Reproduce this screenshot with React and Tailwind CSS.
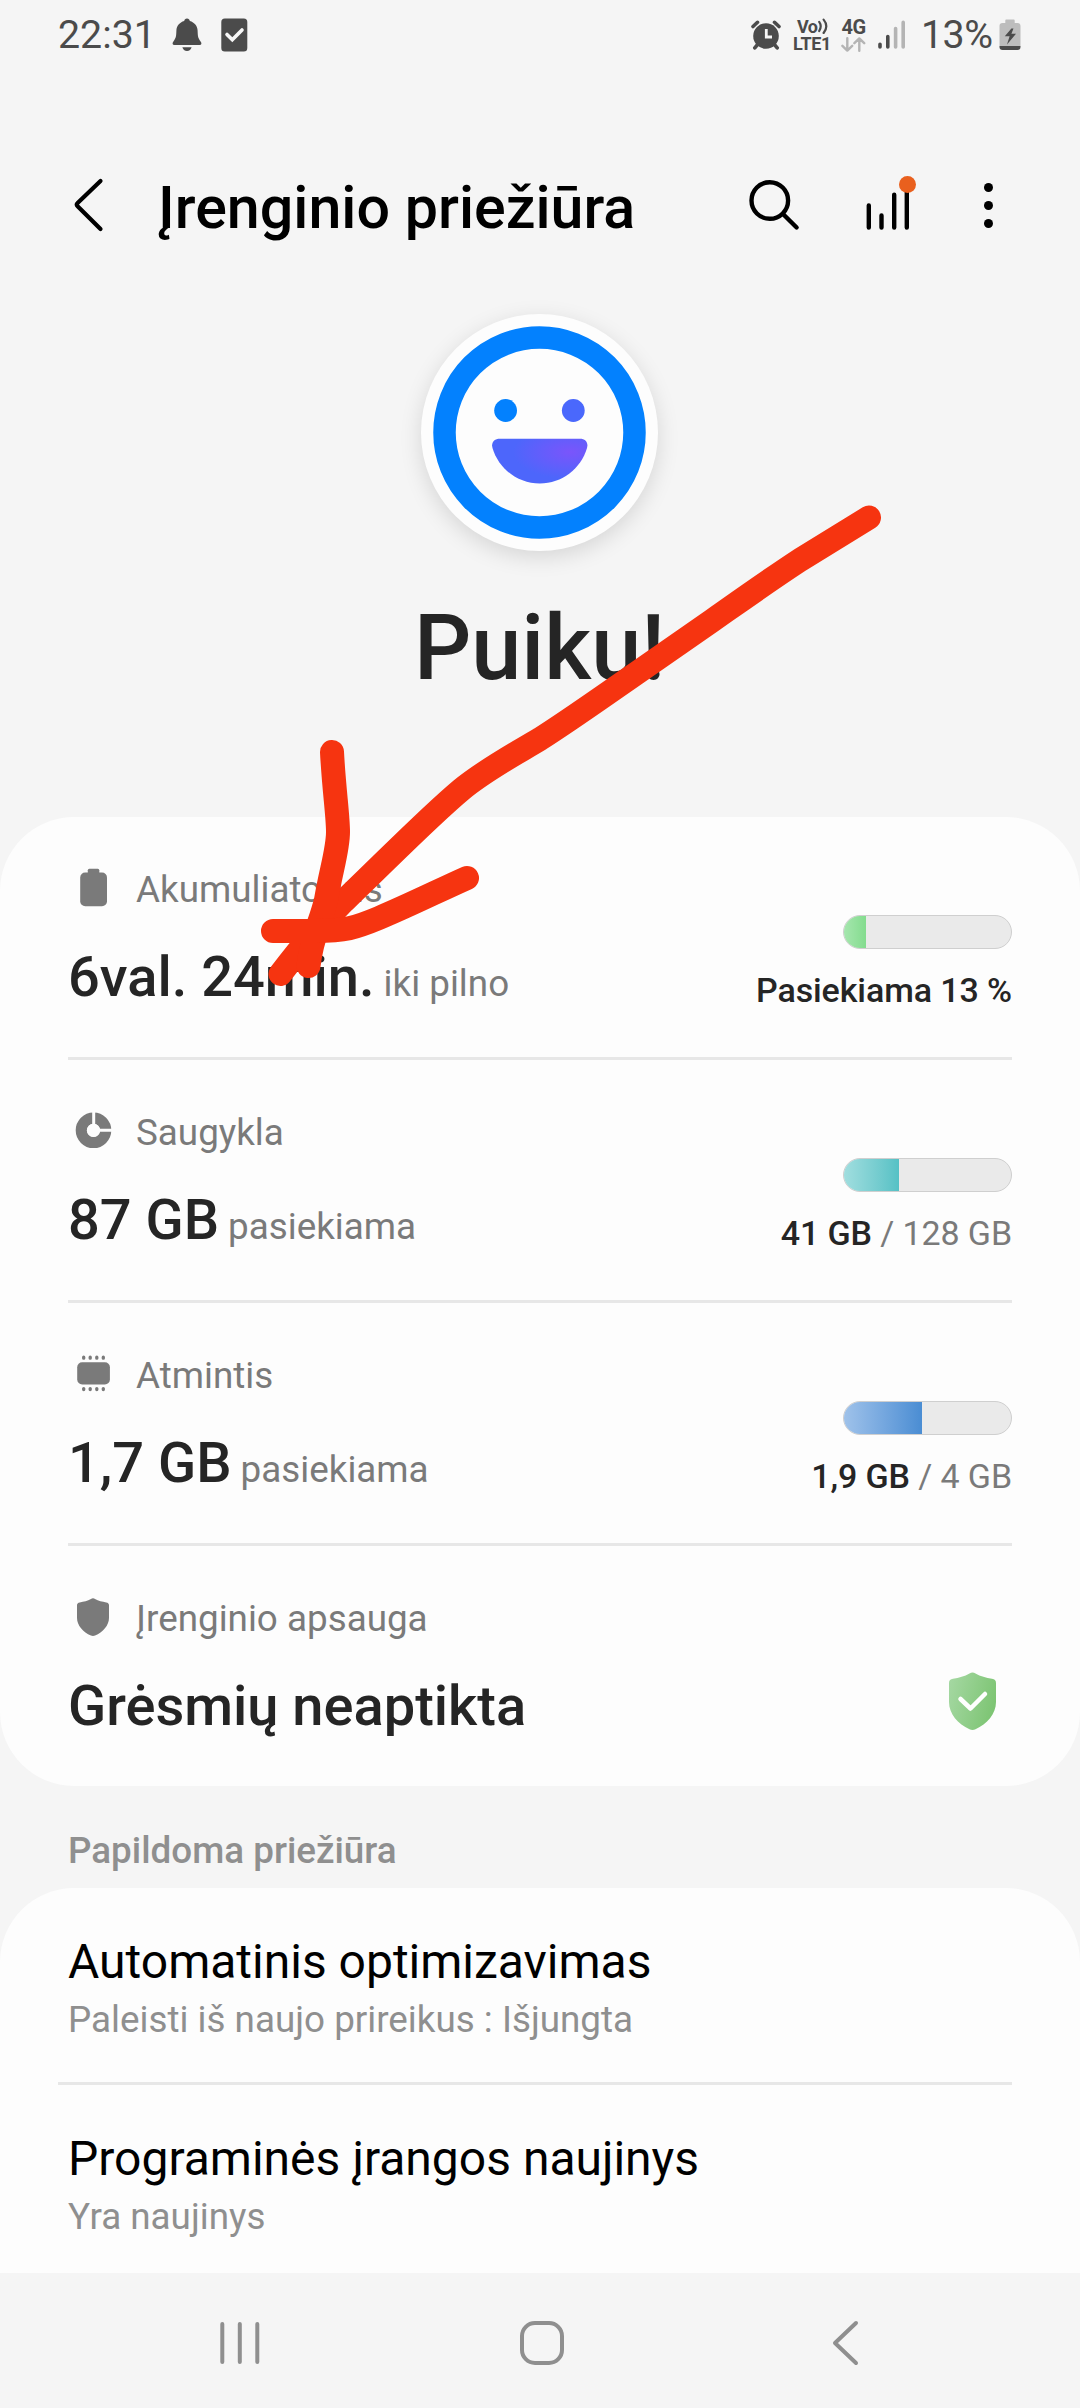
const resources = [
  {
    id: "battery",
    label: "Akumuliatorius",
    value: "6val. 24min.",
    note: "iki pilno",
    percent: 13,
    fill: "bg-linear-to-r from-[#a5e6ae] to-[#83dc8e]",
    used: "Pasiekiama 13 %",
    total: "",
    icon: <BatteryIcon />,
  },
  {
    id: "storage",
    label: "Saugykla",
    value: "87 GB",
    note: "pasiekiama",
    percent: 33,
    fill: "bg-linear-to-r from-[#a0dedf] to-[#55c1c5]",
    used: "41 GB",
    total: " / 128 GB",
    icon: <StorageIcon />,
  },
  {
    id: "memory",
    label: "Atmintis",
    value: "1,7 GB",
    note: "pasiekiama",
    percent: 47,
    fill: "bg-linear-to-r from-[#9fc2ea] to-[#4a8dd3]",
    used: "1,9 GB",
    total: " / 4 GB",
    icon: <MemoryIcon />,
  },
];

const shieldPath =
  "M23.5 0.5C24.5 0.5 25.5 1 26.5 1.6C31.5 4.6 37 5.8 43 6.8C45.6 7.2 47 8.6 47 11V30C47 42 38 52 26.5 57.2C24.5 58.2 22.5 58.2 20.5 57.2C9 52 0 42 0 30V11C0 8.6 1.4 7.2 4 6.8C10 5.8 15.5 4.6 20.5 1.6C21.5 1 22.5 0.5 23.5 0.5Z";

function BatteryIcon() {
  return (
    <svg width="50" height="40" viewBox="0 0 50 40" fill="#7a7a7a">
      <rect x="19.8" y="0.7" width="11.5" height="10" rx="1.5" />
      <rect x="12.2" y="4.5" width="26.8" height="33.8" rx="5" />
    </svg>
  );
}

function StorageIcon() {
  return (
    <svg width="50" height="40" viewBox="0 0 50 40">
      <circle cx="25.5" cy="19.3" r="12.2" fill="none" stroke="#7a7a7a" strokeWidth="11.2" />
      <path d="M25.7 0V19M25.5 19.2H45" stroke="#fdfdfd" strokeWidth="3" />
      <circle cx="25.5" cy="19.3" r="6.6" fill="#fdfdfd" />
    </svg>
  );
}

function MemoryIcon() {
  return (
    <svg width="50" height="40" viewBox="0 0 50 40" fill="#7a7a7a">
      <rect x="9.2" y="8.3" width="32.7" height="22.2" rx="5" />
      {[15.7, 22.2, 28.8, 35.3].map((x) => (
        <path
          key={x}
          d={`M${x} 3.2V4.2M${x} 34.6V35.6`}
          stroke="#7a7a7a"
          strokeWidth="3.3"
          strokeLinecap="round"
        />
      ))}
    </svg>
  );
}

function StatusBar() {
  return (
    <div className="flex h-[70px] items-center px-[59px] text-[#4b4b4b]">
      <span className="-ml-px w-[114px] text-[39.3px] leading-[70px]">22:31</span>
      <svg width="30" height="34" viewBox="0 0 30 34" fill="#4b4b4b">
        <path d="M15 0.5C16.6 0.5 17.6 1.6 17.8 3C22.5 4.3 25.4 8 25.6 12.5C25.8 18.5 26 20 28.6 23.4C30 25.2 29.6 27 27.5 27H2.5C0.4 27 0 25.2 1.4 23.4C4 20 4.2 18.5 4.4 12.5C4.6 8 7.5 4.3 12.2 3C12.4 1.6 13.4 0.5 15 0.5Z" />
        <path d="M10.4 29.2H19.6C19 31.6 17.4 33 15 33C12.6 33 11 31.6 10.4 29.2Z" />
      </svg>
      <svg className="ml-[19px]" width="27" height="34" viewBox="0 0 27 34">
        <rect x="0.3" y="0.5" width="26" height="33" rx="3.5" fill="#4b4b4b" />
        <path d="M6 16.5L11.3 21.8L21 12" fill="none" stroke="#f6f6f6" strokeWidth="3.6" strokeLinecap="round" />
      </svg>

      <div className="ml-auto flex items-center">
        <svg width="30" height="30" viewBox="0 0 30 30">
          <circle cx="15" cy="16" r="12.8" fill="#4b4b4b" />
          <path d="M2 6.5L6.5 2.3M28 6.5L23.5 2.3M7 24L3.8 27.8M23 24L26.2 27.8" stroke="#4b4b4b" strokeWidth="3.6" strokeLinecap="round" />
          <path d="M15.3 9V17H21" fill="none" stroke="#f6f6f6" strokeWidth="2.8" />
        </svg>
        <div className="ml-[12px] w-[40px] text-[18px] font-bold leading-[17px]">
          <div className="flex h-[17px] items-center pl-[4px]">
            <span className="tracking-[-0.5px]">Vo</span>
            <svg width="11" height="16" viewBox="0 0 11 16" fill="none" stroke="#4b4b4b" strokeWidth="2.2" strokeLinecap="round">
              <path d="M1.2 3.8Q4.2 8 1.2 13M5.6 1.6Q11 8 5.6 15" />
            </svg>
          </div>
          <div className="leading-[18px] tracking-[-0.3px]">LTE1</div>
        </div>
        <div className="ml-[7px] flex w-[27px] flex-col items-center">
          <span className="text-[20px] font-bold leading-[17px] tracking-[-0.5px]">4G</span>
          <svg className="mt-px" width="25" height="15" viewBox="0 0 25 15" fill="none" stroke="#b4b4b4" strokeWidth="2.4" strokeLinecap="round" strokeLinejoin="round">
            <path d="M6.3 1.2V13.6M1.4 8.8L6.3 13.6L11.2 8.8M18.3 13.8V1.4M13.4 6.2L18.3 1.4L23.2 6.2" />
          </svg>
        </div>
        <svg className="ml-[11px]" width="28" height="30" viewBox="0 0 28 30" strokeWidth="3.6" strokeLinecap="round">
          <path d="M2 24.2V27M9.8 16.6V27" stroke="#4b4b4b" />
          <path d="M17.6 8.6V27M25.2 2.4V27" stroke="#b4b4b4" />
        </svg>
        <span className="ml-[15px] w-[78px] text-[39.3px] leading-[70px] tracking-[-0.5px]">13%</span>
        <svg width="22" height="32" viewBox="0 0 22 32">
          <path d="M7.5 0.5H14.5C15.3 0.5 15.7 1 15.7 1.8V4H18.5C20.4 4 21.5 5.2 21.5 7V27H0.5V7C0.5 5.2 1.6 4 3.5 4H6.3V1.8C6.3 1 6.7 0.5 7.5 0.5Z" fill="#bdbdbd" />
          <path d="M0.5 27H21.5V28C21.5 30 20.4 31 18.5 31H3.5C1.6 31 0.5 30 0.5 28Z" fill="#4b4b4b" />
          <path d="M12.4 9.5L5.8 17.2H10.6L8 25.5L17 14.8H12.4L14.5 9.5Z" fill="#4b4b4b" />
        </svg>
      </div>
    </div>
  );
}

function Header() {
  return (
    <header className="mt-[65px] flex h-[140px] items-center pl-[73px] pr-[87px] text-black">
      <svg width="32" height="54" viewBox="0 0 32 54" fill="none" stroke="black" strokeWidth="4.2" strokeLinecap="round" strokeLinejoin="round">
        <path d="M27.5 3L4.6 25Q3 26.6 4.6 28.2L27.5 51" />
      </svg>
      <h1 className="ml-[53px] mt-[5px] text-[59.2px] font-medium leading-[70px] whitespace-nowrap">
        Įrenginio priežiūra
      </h1>
      <div className="ml-auto flex items-center">
        <svg width="52" height="52" viewBox="0 0 52 52" fill="none" stroke="black" strokeWidth="4.4" strokeLinecap="round">
          <circle cx="21.8" cy="21.5" r="18.3" />
          <path d="M35.5 35.5L48.6 48.5" />
        </svg>
        <div className="relative ml-[65px]">
          <svg width="50" height="52" viewBox="0 0 50 52" stroke="black" strokeWidth="4.4" strokeLinecap="round">
            <path d="M3.8 26.4V48.6M16.5 36.5V48.6M29.2 15.8V48.6M41.8 8V48.6" />
          </svg>
          <span className="absolute left-[34px] top-[-3px] size-[17px] rounded-full bg-[#e9601e]" />
        </div>
        <div className="ml-[69px] flex flex-col gap-[9px]">
          <span className="size-[9px] rounded-full bg-black" />
          <span className="size-[9px] rounded-full bg-black" />
          <span className="size-[9px] rounded-full bg-black" />
        </div>
      </div>
    </header>
  );
}

function StatusFace() {
  return (
    <div className="mt-[39px] flex flex-col items-center pr-px">
      <div className="flex size-[237px] items-center justify-center rounded-full bg-[#fdfdfd] shadow-[0_6px_22px_rgba(0,0,0,0.13)]">
        <svg width="213" height="213" viewBox="0 0 213 213">
          <defs>
            <radialGradient id="mouth" cx="0.82" cy="0.3" r="0.6">
              <stop offset="0" stopColor="#7a55fb" />
              <stop offset="1" stopColor="#4d66fb" />
            </radialGradient>
          </defs>
          <circle cx="106.5" cy="106.5" r="95" fill="#fdfdfd" stroke="#0381fe" strokeWidth="22.5" />
          <circle cx="72.6" cy="84.5" r="11.4" fill="#0381fe" />
          <circle cx="140.3" cy="84.5" r="11.4" fill="#4a68fc" />
          <path d="M67 112.7H147C152.5 112.7 155.5 116.5 154 122C148 142.5 129 157.5 106.8 157.5C84.5 157.5 65.5 142.5 59.5 122C58 116.5 61 112.7 67 112.7Z" fill="url(#mouth)" />
        </svg>
      </div>
      <h2 className="mt-[43px] text-[90px] font-medium leading-[110px] text-[#252525]">Puiku!</h2>
    </div>
  );
}

function ResourceRow({ item }) {
  return (
    <div className="flex h-[243px] justify-between border-b-[3px] border-[#e7e7e7]">
      <div className="pt-[49px]">
        <div className="flex h-[48px] items-center">
          <div className="-mt-[4px]">{item.icon}</div>
          <span className="ml-[18px] text-[36.8px] leading-[48px] text-[#7a7a7a]">{item.label}</span>
        </div>
        <div className="mt-[30px] flex items-baseline whitespace-nowrap">
          <span className="text-[56px] font-medium leading-[66px] text-[#252525]">{item.value}</span>
          <span className="ml-[9px] text-[36.8px] leading-none text-[#7a7a7a]">{item.note}</span>
        </div>
      </div>
      <div className="flex flex-col items-end pt-[98px]">
        <div className="h-[34px] w-[169px] overflow-hidden rounded-full border border-[#cfcfcf] bg-[#eaeaea]">
          <div className={`h-full ${item.fill}`} style={{ width: `${item.percent}%` }} />
        </div>
        <div className="mt-[21px] text-[34px] leading-[40px] tracking-[-0.1px] whitespace-pre text-[#7a7a7a]">
          <span className="font-medium text-[#252525]">{item.used}</span>
          {item.total}
        </div>
      </div>
    </div>
  );
}

function ProtectionRow() {
  return (
    <div className="flex h-[240px] justify-between">
      <div className="pt-[49px]">
        <div className="flex h-[48px] items-center">
          <div className="-mt-[5px] flex w-[50px] justify-center">
            <svg width="32" height="38" viewBox="0 0 47 58" preserveAspectRatio="none" fill="#7a7a7a">
              <path d={shieldPath} />
            </svg>
          </div>
          <span className="ml-[18px] text-[36.8px] leading-[48px] text-[#7a7a7a]">Įrenginio apsauga</span>
        </div>
        <div className="mt-[30px] text-[56px] font-medium leading-[66px] text-[#252525]">
          Grėsmių neaptikta
        </div>
      </div>
      <svg className="mr-[16px] mt-[126px]" width="47" height="58" viewBox="0 0 47 58">
        <defs>
          <linearGradient id="shield" x1="0" y1="0.3" x2="1" y2="0.6">
            <stop offset="0" stopColor="#a3d7a0" />
            <stop offset="1" stopColor="#7cc472" />
          </linearGradient>
        </defs>
        <path d={shieldPath} fill="url(#shield)" />
        <path d="M11.5 27L21.5 36.5L36 22" fill="none" stroke="white" strokeWidth="4.5" strokeLinecap="round" strokeLinejoin="round" />
      </svg>
    </div>
  );
}

function MenuItem({ title, subtitle }) {
  return (
    <div>
      <div className="text-[48px] leading-[56px] text-black">{title}</div>
      <div className="mt-[6px] text-[36.8px] leading-[48px] text-[#8f8f8f]">{subtitle}</div>
    </div>
  );
}

function NavBar() {
  return (
    <nav className="flex h-[135px] items-center pl-[218px] pt-[5px]">
      <svg width="44" height="46" viewBox="0 0 44 46" stroke="#8f8f8f" strokeWidth="4" strokeLinecap="round">
        <path d="M4.3 4V42M21.8 4V42M39.3 4V42" />
      </svg>
      <svg className="ml-[256px]" width="48" height="48" viewBox="0 0 48 48">
        <rect x="4" y="4" width="40" height="40" rx="13" fill="none" stroke="#8f8f8f" strokeWidth="4" />
      </svg>
      <svg className="ml-[264px]" width="30" height="48" viewBox="0 0 30 48" fill="none" stroke="#8f8f8f" strokeWidth="4" strokeLinecap="round" strokeLinejoin="round">
        <path d="M26 4L5 24L26 44" />
      </svg>
    </nav>
  );
}

// Hand-drawn arrow pointing at the battery estimate
function ArrowMark() {
  return (
    <svg
      className="pointer-events-none absolute left-0 top-0"
      width="1080"
      height="2408"
      viewBox="0 0 1080 2408"
      fill="none"
      stroke="#f63410"
      strokeWidth="24"
      strokeLinecap="round"
      strokeLinejoin="round"
    >
      <path d="M869 517.5L800 560C765 583 740 601 713 620L608 693C585 709 562 725 540 739C515 754 485 770 461 790C430 816 400 847 344 901C318 928 308 938 280.5 974" />
      <path d="M332 752C334 790 338 815 338 832C338 850 331 870 326 900C320 925 312 935 308.5 966" />
      <path d="M273 931H315C345 931 355 928 379 918C410 905 440 890 467 878" />
    </svg>
  );
}

export default function App() {
  return (
    <div className="relative h-[2408px] w-[1080px] overflow-hidden bg-[#f5f5f5] font-['Roboto',sans-serif]">
      <StatusBar />
      <Header />
      <StatusFace />

      <section className="mt-[113px] rounded-[74px] bg-[#fdfdfd] px-[68px]">
        {resources.map((item) => (
          <ResourceRow key={item.id} item={item} />
        ))}
        <ProtectionRow />
      </section>

      <h3 className="flex h-[102px] items-center pl-[68px] pt-[27px] text-[36.8px] font-medium leading-[48px] text-[#8f8f8f]">
        Papildoma priežiūra
      </h3>

      <section className="h-[385px] rounded-t-[74px] bg-[#fdfdfd] pl-[58px] pr-[68px]">
        <div className="h-[197px] border-b-[3px] border-[#e7e7e7] pl-[10px] pt-[46px]">
          <MenuItem title="Automatinis optimizavimas" subtitle="Paleisti iš naujo prireikus : Išjungta" />
        </div>
        <div className="pl-[10px] pt-[46px]">
          <MenuItem title="Programinės įrangos naujinys" subtitle="Yra naujinys" />
        </div>
      </section>

      <NavBar />
      <ArrowMark />
    </div>
  );
}
